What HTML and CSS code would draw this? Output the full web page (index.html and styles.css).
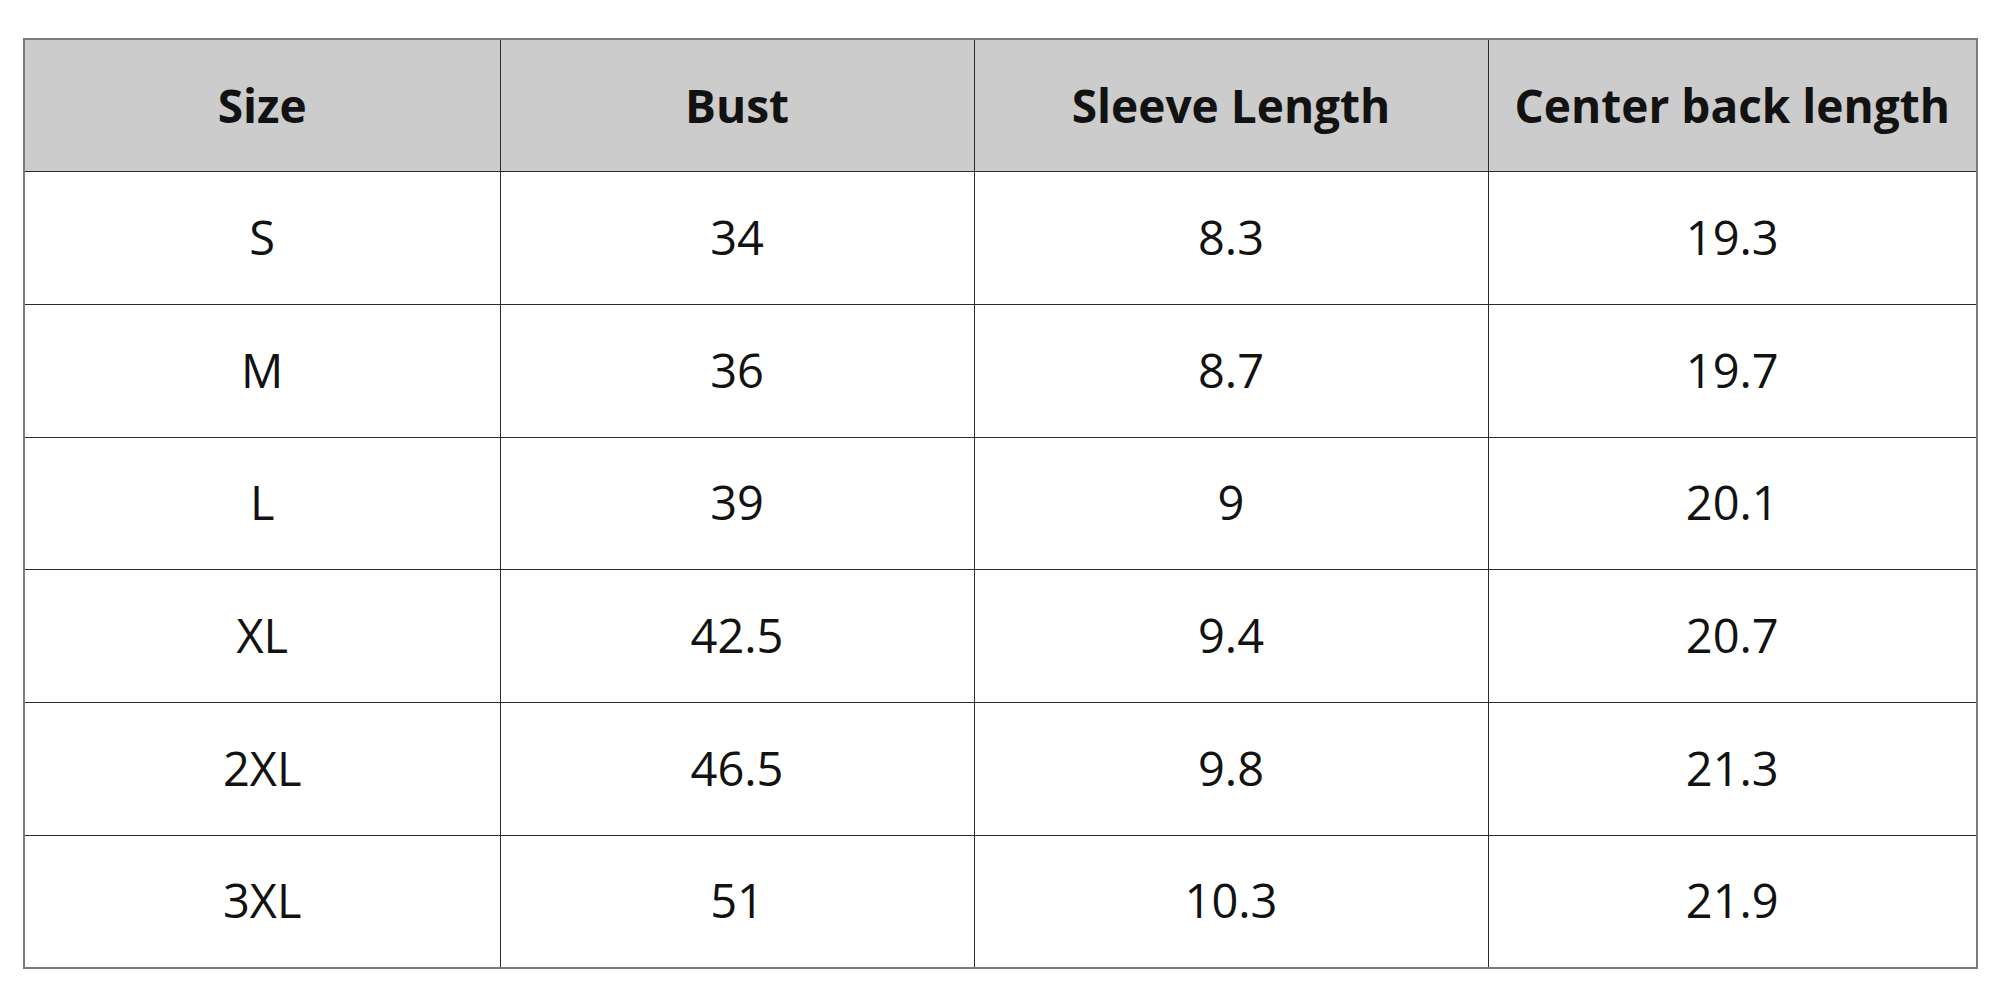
FILE: index.html
```html
<!DOCTYPE html>
<html>
<head>
<meta charset="utf-8">
<link rel="stylesheet" href="styles.css">
</head>
<body>
<table class="size-table">
  <colgroup>
    <col class="c1"><col class="c2"><col class="c3"><col class="c4">
  </colgroup>
  <thead>
    <tr><th>Size</th><th>Bust</th><th>Sleeve Length</th><th>Center back length</th></tr>
  </thead>
  <tbody>
    <tr><td>S</td><td>34</td><td>8.3</td><td>19.3</td></tr>
    <tr><td>M</td><td>36</td><td>8.7</td><td>19.7</td></tr>
    <tr><td>L</td><td>39</td><td>9</td><td>20.1</td></tr>
    <tr><td>XL</td><td>42.5</td><td>9.4</td><td>20.7</td></tr>
    <tr><td>2XL</td><td>46.5</td><td>9.8</td><td>21.3</td></tr>
    <tr><td>3XL</td><td>51</td><td>10.3</td><td>21.9</td></tr>
  </tbody>
</table>
</body>
</html>
```
FILE: styles.css
```css
html, body {
  margin: 0;
  padding: 0;
  background: #ffffff;
}
body {
  padding: 38px 0 0 23px;
  font-family: "Open Sans", "Liberation Sans", sans-serif;
  color: #121212;
}
.size-table {
  border-collapse: collapse;
  table-layout: fixed;
  width: 1953px;
  height: 929px;
  border: 2px solid #7a7a7a;
}
.c1 { width: 476px; }
.c2 { width: 474px; }
.c3 { width: 514px; }
.c4 { width: 489px; }
.size-table tr {
  height: 132.7px;
}
.size-table th,
.size-table td {
  border: 1px solid #2b2b2b;
  text-align: center;
  vertical-align: middle;
  padding: 0 0 2px 0;
}
.size-table th {
  background: #cccccc;
  font-weight: 700;
  font-size: 46px;
}
.size-table td {
  font-weight: 400;
  font-size: 47px;
}
```
